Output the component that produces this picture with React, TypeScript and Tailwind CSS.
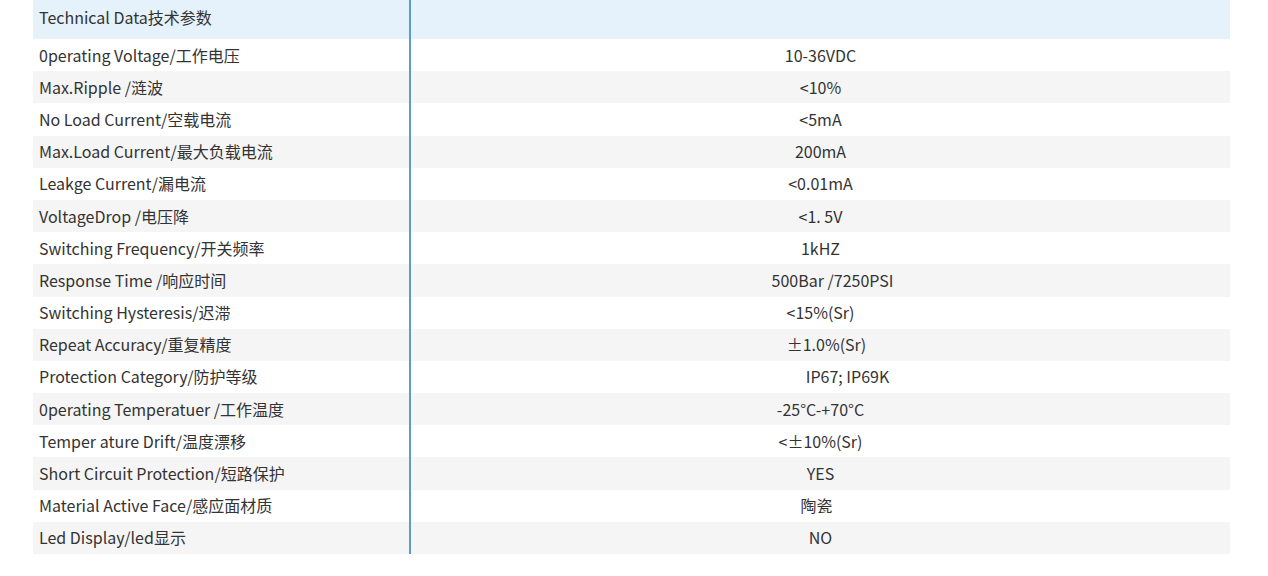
const rows: { label: string; value: string; shift?: string }[] = [
  { label: "0perating Voltage/工作电压", value: "10-36VDC" },
  { label: "Max.Ripple /涟波", value: "<10%" },
  { label: "No Load Current/空载电流", value: "<5mA" },
  { label: "Max.Load Current/最大负载电流", value: "200mA" },
  { label: "Leakge Current/漏电流", value: "<0.01mA" },
  { label: "VoltageDrop /电压降", value: "<1. 5V" },
  { label: "Switching Frequency/开关频率", value: "1kHZ" },
  { label: "Response Time /响应时间", value: "500Bar /7250PSI", shift: "pl-[24px]" },
  { label: "Switching Hysteresis/迟滞", value: "<15%(Sr)" },
  { label: "Repeat Accuracy/重复精度", value: "±1.0%(Sr)", shift: "pl-[12px]" },
  { label: "Protection Category/防护等级", value: "IP67; IP69K", shift: "pl-[54px]" },
  { label: "0perating Temperatuer /工作温度", value: "-25°C-+70°C" },
  { label: "Temper ature Drift/温度漂移", value: "<±10%(Sr)" },
  { label: "Short Circuit Protection/短路保护", value: "YES" },
  { label: "Material Active Face/感应面材质", value: "陶瓷", shift: "pr-[8px]" },
  { label: "Led Display/led显示", value: "NO" },
];

export default function App() {
  return (
    <main
      className="h-[576px] w-[1268px] bg-white text-[16px] text-[#333]"
      style={{ fontFamily: '"Noto Sans CJK SC", "Noto Sans", sans-serif' }}
    >
      <div className="ml-[33px] w-[1197px]">
        <div className="flex h-[39px] bg-[#e5f1fb]">
          <div className="flex w-[376px] items-center pb-[5px] pl-[6px]">
            Technical Data技术参数
          </div>
          <div className="w-[2px] bg-[#5c9cc6]" />
          <div className="flex-1" />
        </div>
        {rows.map((r, i) => (
          <div
            key={r.label}
            className={`flex h-[32.1875px] ${i % 2 === 1 ? "bg-[#f5f5f5]" : "bg-white"}`}
          >
            <div className="flex w-[376px] items-center pb-[1px] pl-[6px] whitespace-nowrap">
              {r.label}
            </div>
            <div className="w-[2px] bg-[#5c9cc6]" />
            <div
              className={`flex flex-1 items-center justify-center pb-[1px] whitespace-nowrap ${r.shift ?? ""}`}
            >
              {r.value}
            </div>
          </div>
        ))}
      </div>
    </main>
  );
}
